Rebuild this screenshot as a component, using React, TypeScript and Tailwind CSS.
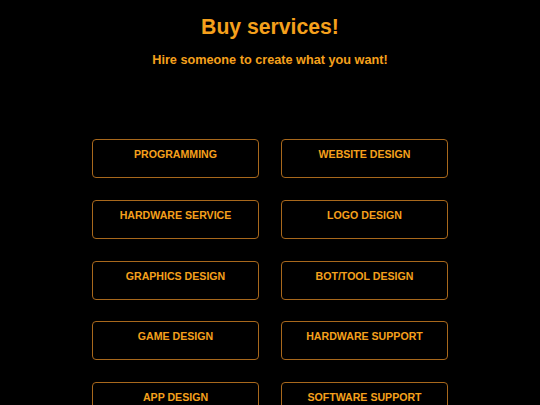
const services = [
  'PROGRAMMING',
  'WEBSITE DESIGN',
  'HARDWARE SERVICE',
  'LOGO DESIGN',
  'GRAPHICS DESIGN',
  'BOT/TOOL DESIGN',
  'GAME DESIGN',
  'HARDWARE SUPPORT',
  'APP DESIGN',
  'SOFTWARE SUPPORT',
];

function App() {
  return (
    <div className="min-h-screen bg-black text-[#f5a01c] font-['Liberation_Sans',Arial,sans-serif]">
      {/* Header */}
      <header className="pt-[14px] text-center">
        <h1 className="text-[21.2px] leading-[26px] font-bold">Buy services!</h1>
        <p className="mt-[12px] text-[12.7px] leading-[16px] font-bold">Hire someone to create what you want!</p>
      </header>

      {/* Service buttons */}
      <div className="mx-auto mt-[71px] grid w-[356px] grid-cols-2 gap-x-[22px] gap-y-[21.75px] pb-8">
        {services.map((s) => (
          <button
            key={s}
            className="h-[39px] rounded-[4px] border border-[#a8681c] pt-[8px] text-center text-[10.6px] leading-[13px] font-bold flex justify-center items-start"
          >
            {s}
          </button>
        ))}
      </div>
    </div>
  );
}

export default App
